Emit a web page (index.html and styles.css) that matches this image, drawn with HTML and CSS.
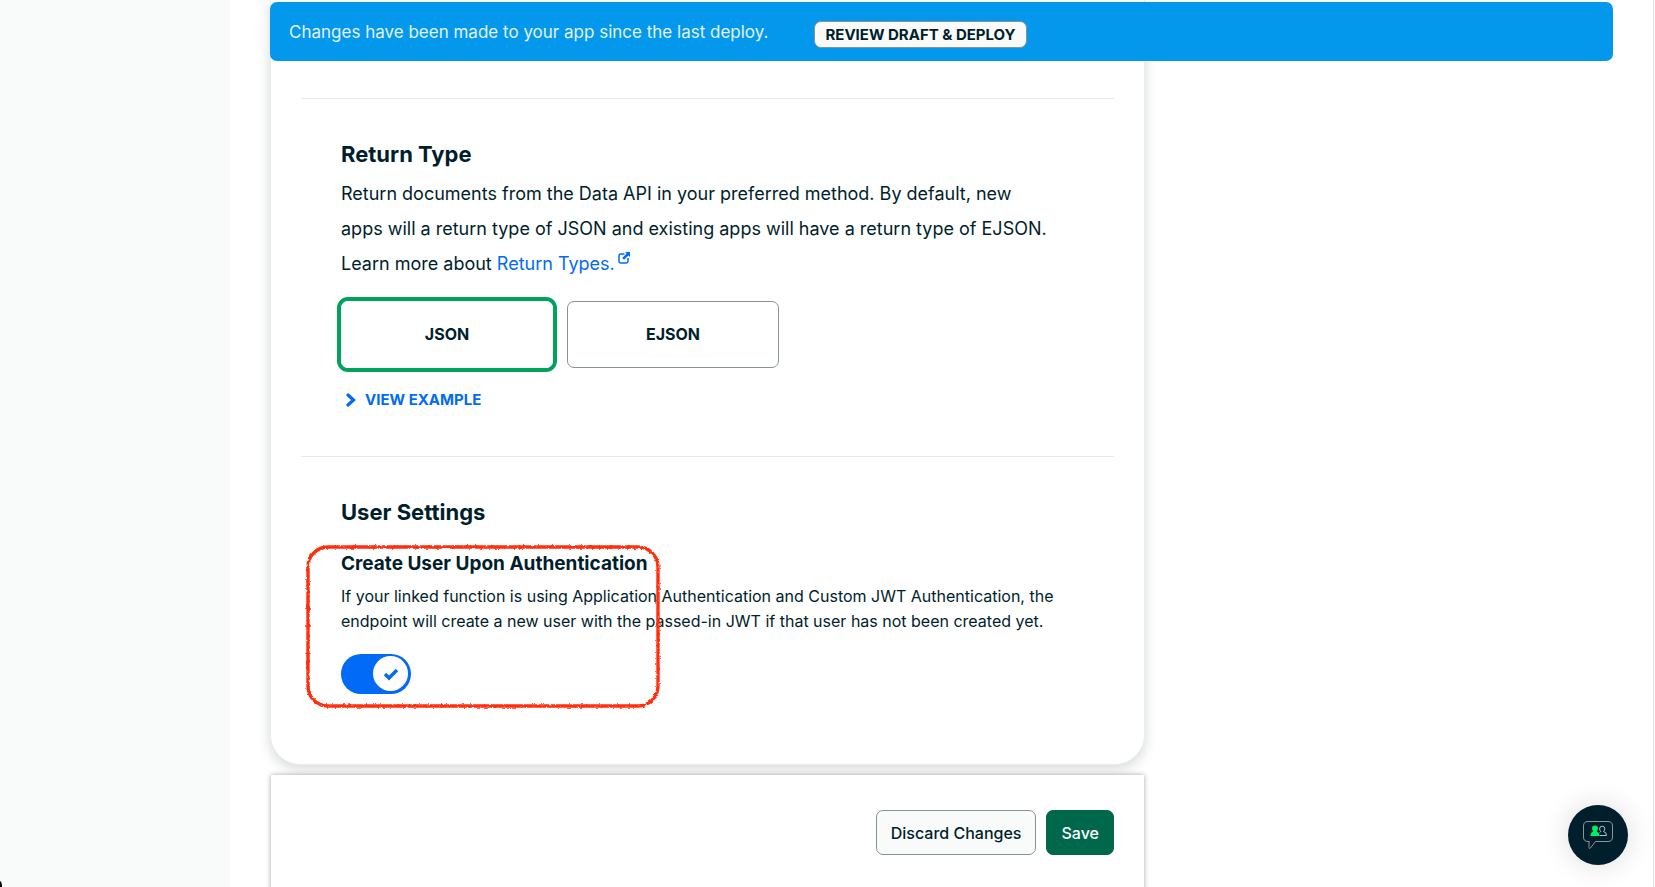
FILE: index.html
```html
<!DOCTYPE html>
<html lang="en">
<head>
<meta charset="utf-8">
<title>Data API Settings</title>
<link rel="stylesheet" href="styles.css">
</head>
<body>
<aside class="sidebar"></aside>
<main class="main">
  <div class="banner" role="status">
    <p class="banner-text">Changes have been made to your app since the last deploy.</p>
    <button class="banner-button" type="button">REVIEW DRAFT &amp; DEPLOY</button>
  </div>

  <form class="content">
    <div class="card">
      <section class="section">
        <h2 class="title">Return Type</h2>
        <p class="lead">Return documents from the Data API in your preferred method. By default, new<br>apps will a return type of JSON and existing apps will have a return type of EJSON.<br>Learn more about <a class="link" href="#return-types">Return Types.<svg class="link-icon" viewBox="0 0 12 12" aria-hidden="true"><path d="M6.500 2H2.700Q1 2 1 3.700V9.300Q1 11 2.700 11H8.300Q10 11 10 9.300V6" fill="none" stroke="currentColor" stroke-width="1.500"/><path d="M7 0H12V5L10.400 3.400L6 7.800L4.200 6L8.600 1.600Z" fill="currentColor"/></svg></a></p>
        <div class="choices" role="radiogroup" aria-label="Return Type">
          <label class="choice"><input class="choice-input" type="radio" name="type" checked>JSON</label>
          <label class="choice"><input class="choice-input" type="radio" name="type">EJSON</label>
        </div>
        <button class="example" type="button">
          <svg class="example-icon" viewBox="0 0 10 14" aria-hidden="true"><path d="M2 2L7.500 7L2 12" fill="none" stroke="currentColor" stroke-width="3.200" stroke-linecap="round" stroke-linejoin="miter"/></svg>
          VIEW EXAMPLE
        </button>
      </section>

      <section class="section">
        <h2 class="title">User Settings</h2>
        <div class="setting">
          <h3 class="setting-title" id="create-user">Create User Upon Authentication</h3>
          <p class="setting-text">If your linked function is using Application Authentication and Custom JWT Authentication, the endpoint will create a new user with the passed-in JWT if that user has not been created yet.</p>
          <label class="toggle">
            <input class="toggle-input" type="checkbox" role="switch" aria-labelledby="create-user" checked>
            <span class="toggle-knob"><svg class="toggle-icon" viewBox="0 0 16 14" aria-hidden="true"><path d="M2 7L6 11L14 3" fill="none" stroke="currentColor" stroke-width="3.400"/></svg></span>
          </label>
          <svg class="marker" viewBox="0 0 360 170" aria-hidden="true">
            <defs><filter id="rough" x="-5%" y="-5%" width="110%" height="110%"><feTurbulence type="fractalNoise" baseFrequency="0.35" numOctaves="2" seed="4"/><feDisplacementMap in="SourceGraphic" scale="3" xChannelSelector="R" yChannelSelector="G"/></filter></defs>
            <rect x="5" y="5" width="350" height="159" rx="20" fill="none" stroke="#ff2f0a" stroke-width="3.400" filter="url(#rough)"/>
          </svg>
        </div>
      </section>
    </div>

    <footer class="footer">
      <button class="button" type="reset">Discard Changes</button>
      <button class="button button-primary" type="submit">Save</button>
    </footer>
  </form>
</main>
<button class="chat" type="button" aria-label="Open chat">
  <svg class="chat-icon" viewBox="0 0 36 36" aria-hidden="true">
    <path d="M9.500 24.500H8Q3.500 24.500 3.500 20V9Q3.500 4.500 8 4.500H28Q32.500 4.500 32.500 9V20Q32.500 24.500 28 24.500H15.500L10.500 31Q9 32.500 9 30.500V24.500" fill="none" stroke="#8a9699" stroke-width="1"/>
    <path d="M19.500 18.500H26.500Q26.500 15 23.500 14.500Q24.800 13.500 24.800 11.800A2.600 2.600 0 0 0 19.600 11.800Q19.600 13.500 20.800 14.500L19.500 15.500" fill="none" stroke="#b8c4c2" stroke-width="1"/>
    <path d="M10.500 19Q10.500 15.200 13.400 14.400Q12 13.300 12 11.600A3 3 0 0 1 18 11.600Q18 13.300 16.600 14.400Q19.500 15.200 19.500 19Z" fill="#00ed64"/>
  </svg>
</button>
</body>
</html>
```

FILE: styles.css
```css
* { box-sizing: border-box; }

body {
  margin: 0;
  height: 100vh;
  overflow: hidden;
  display: flex;
  background: #fff;
  color: #001e2b;
  font-family: Inter, "Liberation Sans", sans-serif;
  font-size: 16px;
}

h2, h3, p { margin: 0; }
button { font-family: inherit; cursor: pointer; }

.sidebar {
  position: relative;
  flex: 0 0 230px;
  background: #f9fbfa;
}

.sidebar::after {
  content: "";
  position: absolute;
  left: 0;
  bottom: 0;
  width: 2px;
  height: 6px;
  background: #000;
  border-top-right-radius: 2px 6px;
}

.main {
  position: relative;
  flex: 1;
  min-width: 0;
  margin-right: 1px;
  padding: 0 40px;
  border-right: 1px solid #dfe2e1;
}

.banner {
  position: absolute;
  top: 2px;
  left: 40px;
  right: 40px;
  z-index: 2;
  display: flex;
  align-items: center;
  gap: 46px;
  height: 59px;
  padding: 0 19px;
  border-radius: 7px;
  background: #0498ec;
}

.banner-text {
  color: #e1f2fb;
  font-size: 17px;
  line-height: 24px;
}

.banner-button {
  height: 27px;
  margin-top: 6px;
  padding: 0 10px;
  border: 1px solid #889397;
  border-radius: 7px;
  background: #f9fbfa;
  color: #001e2b;
  font-size: 15px;
  font-weight: 700;
  line-height: 24px;
}

.card {
  width: calc(65% + 2px);
  padding: 98px 30px 70px;
  border: 1px solid #e8edeb;
  border-top: 0;
  border-radius: 0 0 30px 30px;
  background: #fff;
  box-shadow: 0 4px 12px 1px rgba(0, 30, 43, 0.15);
}

.section {
  padding: 39px 40px 0;
  border-top: 1px solid #e3ecea;
}

.section + .section { margin-top: 43px; }

.title {
  font-size: 22px;
  font-weight: 700;
  line-height: 32px;
}

.lead {
  margin-top: 6px;
  font-size: 18px;
  line-height: 35px;
}

.link {
  color: #016bf8;
  text-decoration: none;
}

.link-icon {
  width: 12px;
  height: 12px;
  margin-left: 3px;
  vertical-align: 6px;
}

.choices {
  display: flex;
  gap: 14px;
  margin-top: 20px;
}

.choice {
  display: flex;
  align-items: center;
  justify-content: center;
  width: 212px;
  height: 67px;
  padding-bottom: 2px;
  border: 1px solid #889397;
  border-radius: 7px;
  font-size: 16px;
  font-weight: 700;
  cursor: pointer;
}

.choice-input {
  appearance: none;
  width: 0;
  height: 0;
  margin: 0;
}

.choice:has(:checked) {
  border-color: #fff;
  box-shadow: 0 0 0 4px #00a35c;
}

.example {
  display: flex;
  align-items: center;
  gap: 9px;
  margin-top: 19px;
  padding: 0 5px;
  border: 0;
  background: none;
  color: #016bf8;
  font-size: 15px;
  font-weight: 700;
  line-height: 26px;
}

.example-icon {
  width: 10px;
  height: 14px;
}

.setting {
  position: relative;
  margin-top: 20px;
}

.setting-title {
  font-size: 19px;
  font-weight: 700;
  line-height: 32px;
}

.setting-text {
  margin-top: 4px;
  font-size: 16px;
  line-height: 25px;
}

.toggle {
  position: relative;
  display: block;
  width: 70px;
  height: 40px;
  margin-top: 20px;
}

.toggle-input {
  appearance: none;
  display: block;
  width: 70px;
  height: 40px;
  margin: 0;
  border-radius: 20px;
  background: #016bf8;
  cursor: pointer;
}

.toggle-knob {
  position: absolute;
  top: 2px;
  right: 3px;
  display: grid;
  place-items: center;
  width: 35px;
  height: 35px;
  border-radius: 50%;
  background: #fff;
  color: #016bf8;
  pointer-events: none;
}

.toggle-icon {
  width: 16px;
  height: 14px;
}

.marker {
  position: absolute;
  top: -6px;
  left: -38px;
  width: 360px;
  height: 170px;
  pointer-events: none;
}

.footer {
  position: relative;
  display: flex;
  justify-content: flex-end;
  gap: 10px;
  width: 65%;
  margin: 10px 1px 0;
  padding: 35px 30px 40px;
  background: #fff;
  box-shadow: 0 0 5px rgba(0, 0, 0, 0.35);
}

.button {
  height: 45px;
  padding: 0 14px;
  border: 1px solid #889397;
  border-radius: 7px;
  background: #f9fbfa;
  color: #001e2b;
  font-size: 16px;
  font-weight: 500;
}

.button-primary {
  border-color: #00684a;
  background: #00684a;
  color: #fff;
}

.chat {
  position: fixed;
  right: 27px;
  bottom: 22px;
  display: grid;
  place-items: center;
  width: 60px;
  height: 60px;
  padding: 0;
  border: 0;
  border-radius: 50%;
  background: #001e2b;
  box-shadow: 0 0 28px rgba(0, 0, 0, 0.14);
}

.chat-icon {
  width: 36px;
  height: 36px;
}
```
